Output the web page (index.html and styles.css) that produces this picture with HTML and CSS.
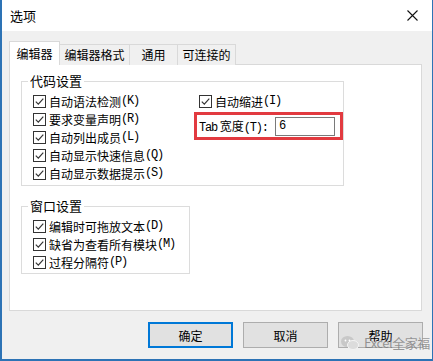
FILE: index.html
```html
<!DOCTYPE html>
<html lang="zh-CN">
<head>
    <meta charset="UTF-8">
    <title>选项</title>
    <link rel="stylesheet" href="styles.css">
</head>
<body>

<div class="window">
    <div class="titlebar">
        <span class="title">选项</span>
        <svg class="close" width="11" height="11" viewBox="0 0 11 11">
            <path d="M0.5 0.5 L10.5 10.5 M10.5 0.5 L0.5 10.5" stroke="#111" stroke-width="1.1" fill="none"/>
        </svg>
    </div>

    <div class="content">
        <div class="tabs">
            <div class="tab active" style="width: 51px">编辑器</div>
            <div class="tab" style="width: 70px">编辑器格式</div>
            <div class="tab" style="width: 48px">通用</div>
            <div class="tab" style="width: 58px">可连接的</div>
        </div>

        <div class="panel">
            <fieldset class="group group-code">
                <legend>代码设置</legend>
                <div class="cols">
                    <div class="col-left">
                        <label class="opt"><span class="check"></span>自动语法检测<span class="key">(K)</span></label>
                        <label class="opt"><span class="check"></span>要求变量声明<span class="key">(R)</span></label>
                        <label class="opt"><span class="check"></span>自动列出成员<span class="key">(L)</span></label>
                        <label class="opt"><span class="check"></span>自动显示快速信息<span class="key">(Q)</span></label>
                        <label class="opt"><span class="check"></span>自动显示数据提示<span class="key">(S)</span></label>
                    </div>
                    <div class="col-right">
                        <label class="opt"><span class="check"></span>自动缩进<span class="key">(I)</span></label>
                        <div class="highlight">
                            <span class="tab-label"><span class="key">Tab</span> 宽度<span class="key">(T):</span></span>
                            <span class="tab-input">6</span>
                        </div>
                    </div>
                </div>
            </fieldset>

            <fieldset class="group group-window">
                <legend>窗口设置</legend>
                <label class="opt"><span class="check"></span>编辑时可拖放文本<span class="key">(D)</span></label>
                <label class="opt"><span class="check"></span>缺省为查看所有模块<span class="key">(M)</span></label>
                <label class="opt"><span class="check"></span>过程分隔符<span class="key">(P)</span></label>
            </fieldset>
        </div>

        <div class="buttons">
            <button class="btn default">确定</button>
            <button class="btn">取消</button>
            <button class="btn">帮助</button>
        </div>
    </div>

    <div class="watermark">
        <svg width="20" height="16" viewBox="0 0 20 16">
            <ellipse cx="7.5" cy="6.5" rx="6.5" ry="5.5" fill="#c8c8c8"/>
            <ellipse cx="13" cy="10" rx="5.5" ry="4.5" fill="#dcdcdc" stroke="#f4f4f4" stroke-width="1"/>
            <circle cx="5.5" cy="5.5" r="0.9" fill="#fff"/>
            <circle cx="9.5" cy="5.5" r="0.9" fill="#fff"/>
        </svg>
        <span>Excel全家福</span>
    </div>
</div>

</body>
</html>
```

FILE: styles.css
```css
body {
    margin: 0;
    background: #ffffff;
    font-family: "Noto Sans CJK SC", "Noto Sans", sans-serif;
    font-size: 12px;
    color: #000;
}
.window {
    position: relative;
    width: 433px;
    height: 361px;
    box-sizing: border-box;
    border: 1px solid #2d73b5;
    border-top: none;
    border-left-width: 2px;
    border-bottom-width: 2px;
    background: #f0f0f0;
    overflow: hidden;
}
.titlebar {
    height: 31px;
    background: #ffffff;
    display: flex;
    align-items: center;
    justify-content: space-between;
    padding: 0 14px 0 8px;
}
.title {
    font-size: 13px;
    line-height: 16px;
}
.close {
    display: block;
}
.content {
    padding: 10px 9px 0 7px;
}

/* pestañas */
.tabs {
    display: flex;
    align-items: flex-end;
    height: 24px;
    margin-bottom: -1px;
    position: relative;
    z-index: 1;
}
.tab {
    box-sizing: border-box;
    height: 21px;
    border: 1px solid #d9d9d9;
    border-bottom: none;
    border-left: none;
    background: #f0f0f0;
    text-align: center;
    line-height: 19px;
    font-size: 12px;
}
.tab.active {
    height: 24px;
    background: #ffffff;
    border-left: 1px solid #d9d9d9;
    line-height: 24px;
}
.panel {
    box-sizing: border-box;
    width: 413px;
    height: 247px;
    background: #ffffff;
    border: 1px solid #d9d9d9;
    padding: 0 0 0 11px;
}

/* grupos */
.group {
    box-sizing: border-box;
    margin: 0;
    border: 1px solid #dcdcdc;
    padding: 3px 0 0 11px;
}
.group legend {
    padding: 0 2px;
    margin-left: -5px;
    font-size: 13px;
    line-height: 16px;
}
.group-code {
    width: 322px;
    height: 113px;
    margin-top: 8px;
}
.group-window {
    width: 169px;
    height: 76px;
    margin-top: 12px;
}
.cols {
    display: flex;
}
.col-left {
    width: 161px;
}
.col-right {
    width: 149px;
}
.col-right > .opt {
    padding-left: 5px;
}
.opt {
    display: flex;
    align-items: center;
    height: 18px;
    font-size: 12px;
    white-space: nowrap;
}
.key {
    font-family: "Liberation Mono", monospace;
    font-size: 12px;
    letter-spacing: -1.2px;
}
.check {
    box-sizing: border-box;
    width: 13px;
    height: 13px;
    border: 1px solid #333;
    margin-right: 3px;
    background: #fff url("data:image/svg+xml;utf8,<svg xmlns='http://www.w3.org/2000/svg' width='11' height='11'><path d='M1.8 5.6 L4.3 8.1 L9.3 2.6' stroke='%23333' stroke-width='1.2' fill='none'/></svg>") no-repeat center;
    flex: none;
}

/* recuadro rojo */
.highlight {
    box-sizing: border-box;
    display: flex;
    align-items: center;
    height: 28px;
    margin-top: 2px;
    border: 3px solid #e23a40;
    padding: 0 0 0 2px;
    font-size: 12px;
}
.tab-label {
    width: 76px;
    white-space: nowrap;
}
.tab-input {
    box-sizing: border-box;
    width: 60px;
    height: 19px;
    border: 1px solid #7a7a7a;
    padding-left: 3px;
    line-height: 17px;
    font-family: "Liberation Mono", monospace;
    font-size: 12px;
}

/* botones */
.buttons {
    display: flex;
    justify-content: flex-end;
    gap: 10px;
    margin-top: 11px;
}
.btn {
    box-sizing: border-box;
    width: 85px;
    height: 26px;
    background: #e1e1e1;
    border: 1px solid #adadad;
    font-family: "Noto Sans CJK SC", sans-serif;
    font-size: 12px;
    color: #000;
    padding: 0;
}
.btn.default {
    border: 2px solid #0078d7;
}
.watermark {
    position: absolute;
    left: 338px;
    top: 333px;
    display: flex;
    align-items: center;
    gap: 4px;
    color: rgba(120, 120, 120, 0.75);
    font-size: 13px;
    letter-spacing: -0.5px;
}
```
